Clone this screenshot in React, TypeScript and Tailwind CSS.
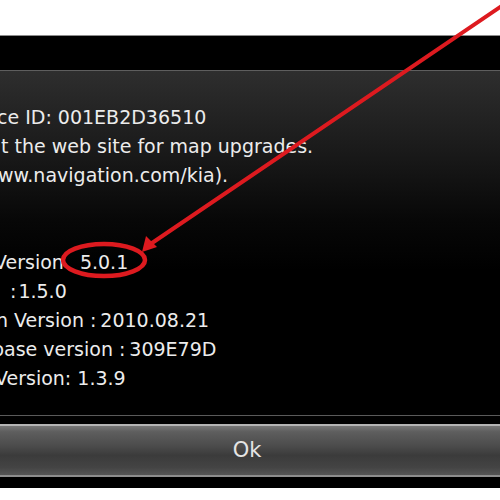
const infoLines = [
  { text: "ce ID: 001EB2D36510", shift: "ml-[-3px]" },
  { text: "t the web site for map upgrades.", shift: "ml-[1px]" },
  { text: "ww.navigation.com/kia).", shift: "ml-[-2px]" },
];

const Annotation = () => (
  <svg className="absolute inset-0 pointer-events-none" width="500" height="500" viewBox="0 0 500 500">
    <line x1="506" y1="3" x2="152" y2="243" stroke="#dd1a1f" strokeWidth="4" strokeLinecap="round" />
    <polygon points="142,252 146,236 157,247" fill="#dd1a1f" />
    <ellipse cx="104" cy="260" rx="41" ry="16" fill="none" stroke="#dd1a1f" strokeWidth="4.5" />
  </svg>
);

export default function App() {
  return (
    <div className="relative w-[500px] h-[500px] overflow-hidden bg-white font-['DejaVu_Sans',sans-serif]">
      <div className="h-[35px] bg-white" />
      <div className="h-[36px] bg-black border-t border-t-[#8c8c8c] border-b border-b-[#5e5e5e]" />

      <div className="h-[344px] pt-[32px] bg-[linear-gradient(to_bottom,#2e2e2e_0px,#1a1a1a_80px,#070707_150px,#000_200px)] text-[#ececec] text-[19px] leading-[29px] whitespace-nowrap overflow-hidden">
        {infoLines.map((line) => (
          <p key={line.text} className={line.shift}>
            {line.text}
          </p>
        ))}
        <div className="h-[58px]" />
        <p className="ml-[-6px]">
          Version<span className="ml-[16px]">5.0.1</span>
        </p>
        <p className="ml-[10px]">
          :<span className="ml-[2px]">1.5.0</span>
        </p>
        <p className="ml-[-4px]">
          n Version<span className="ml-[6px]">:</span>
          <span className="ml-[4px]">2010.08.21</span>
        </p>
        <p className="ml-[-8px]">
          base version<span className="ml-[6px]">:</span>
          <span className="ml-[4px]">309E79D</span>
        </p>
        <p className="ml-[-5px]">Version: 1.3.9</p>
      </div>

      <div className="h-[9px] bg-black border-t border-t-[#5a5a5a]" />
      <button className="w-full h-[53px] flex items-center justify-center border-t-2 border-t-[#b4b4b4] border-b-2 border-b-[#8e8e8e] bg-[linear-gradient(to_bottom,#767676_0%,#5e5e5e_12%,#4c4c4c_40%,#3b3b3b_60%,#444444_85%,#565656_100%)] text-[#e4e4e4] text-[21px]">
        <span className="mr-[6px]">Ok</span>
      </button>
      <div className="h-[11px] bg-black" />

      <Annotation />
    </div>
  );
}
